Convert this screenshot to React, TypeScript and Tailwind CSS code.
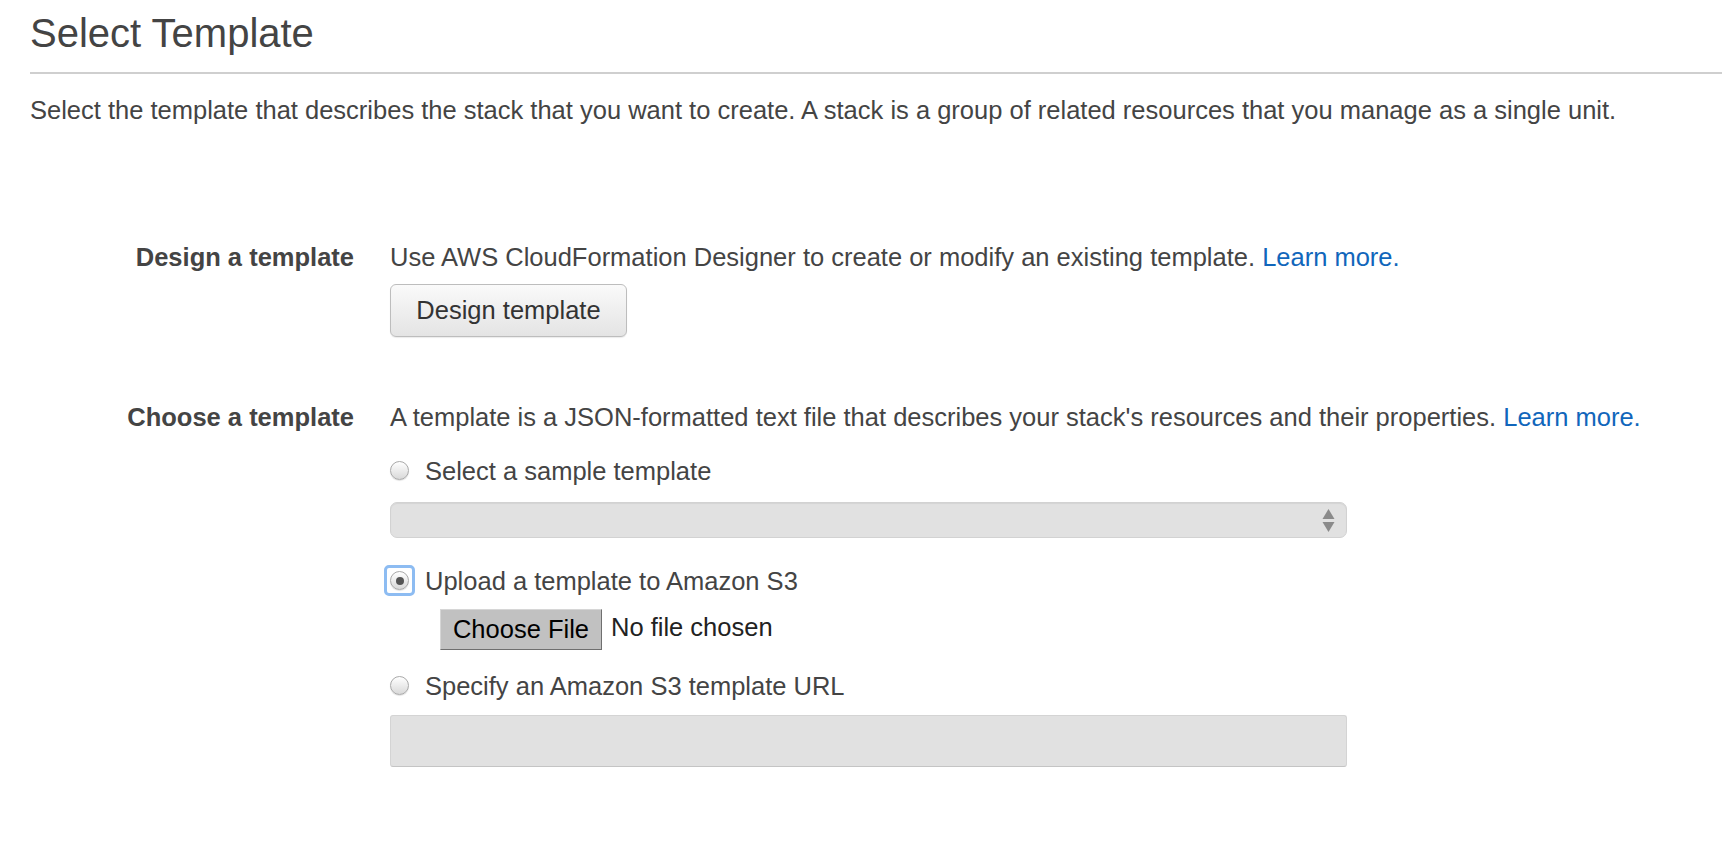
import React from 'react'

const font = { fontFamily: '"Liberation Sans", Arial, Helvetica, sans-serif' }

const Radio = ({ checked = false, focused = false }: { checked?: boolean; focused?: boolean }) => (
  <span
    className={`flex h-[31px] w-[31px] shrink-0 items-center justify-center rounded-[5px] ${
      focused ? 'border-[3px] border-[#8dbcf2]' : 'border-[3px] border-transparent'
    }`}
  >
    <span className="flex h-[19px] w-[19px] items-center justify-center rounded-full border border-[#a9a9a9] bg-gradient-to-b from-[#ffffff] to-[#d9d9d9] shadow-[0_1px_1px_rgba(0,0,0,0.12)]">
      {checked && <span className="h-[8px] w-[8px] rounded-full bg-[#555]" />}
    </span>
  </span>
)

const Option = ({ label, checked, focused }: { label: string; checked?: boolean; focused?: boolean }) => (
  <label className="-ml-[6px] flex h-[31px] items-center gap-[10px]">
    <Radio checked={checked} focused={focused} />
    <span className="text-[25.5px] leading-[28px]">{label}</span>
  </label>
)

export default function App() {
  return (
    <div className="min-h-screen bg-white text-[#444]" style={font}>
      <div className="pl-[30px] pt-[10px]">
        <h1 className="text-[40px] leading-[46px] font-normal">Select Template</h1>
      </div>
      <div className="ml-[30px] mt-[16px] border-t-2 border-[#cfcfcf]" />
      <p className="ml-[30px] mt-[22px] text-[25.5px] leading-[28px]">
        Select the template that describes the stack that you want to create. A stack is a group of related resources that you manage as a single unit.
      </p>

      <div className="mt-[119px] flex gap-[36px]">
        <div className="w-[354px] shrink-0 text-right text-[25.5px] font-bold leading-[28px]">Design a template</div>
        <div className="flex flex-col items-start">
          <p className="text-[25.5px] leading-[28px]">
            Use AWS CloudFormation Designer to create or modify an existing template.{' '}
            <a className="text-[#1166bb]">Learn more.</a>
          </p>
          <button className="mt-[13px] h-[53px] w-[237px] rounded-[6px] border border-[#bdbdbd] bg-gradient-to-b from-[#fafafa] to-[#e4e4e4] text-[25.5px] text-[#333] shadow-[0_1px_1px_rgba(0,0,0,0.08)]">
            Design template
          </button>
        </div>
      </div>

      <div className="mt-[66px] flex gap-[36px]">
        <div className="w-[354px] shrink-0 text-right text-[25.5px] font-bold leading-[28px]">Choose a template</div>
        <div className="flex flex-col items-start">
          <p className="text-[25.5px] leading-[28px]">
            A template is a JSON-formatted text file that describes your stack's resources and their properties.{' '}
            <a className="text-[#1166bb]">Learn more.</a>
          </p>

          <div className="mt-[24px]">
            <Option label="Select a sample template" />
          </div>
          <div className="relative mt-[16px] h-[36px] w-[957px] rounded-[7px] border border-[#d2d2d2] bg-[#e1e1e1] shadow-[inset_0_1px_1px_rgba(0,0,0,0.06)]">
            <svg className="absolute right-[11px] top-[5px]" width="13" height="25" viewBox="0 0 13 25">
              <path d="M6.5 1 L12.5 11 L0.5 11 Z" fill="#8a8a8a" />
              <path d="M0.5 14 L12.5 14 L6.5 24 Z" fill="#8a8a8a" />
            </svg>
          </div>

          <div className="mt-[27px]">
            <Option label="Upload a template to Amazon S3" checked focused />
          </div>
          <div className="ml-[50px] mt-[13px] flex items-center gap-[9px]">
            <button className="h-[41px] w-[162px] border border-t-[#d6d6d6] border-l-[#d6d6d6] border-b-[#6f6f6f] border-r-[#6f6f6f] bg-[#c1c1c1] text-[25.5px] text-black">
              Choose File
            </button>
            <span className="pb-[5px] text-[25.5px] leading-[28px] text-[#222]">No file chosen</span>
          </div>

          <div className="mt-[20px]">
            <Option label="Specify an Amazon S3 template URL" />
          </div>
          <div className="mt-[14px] h-[52px] w-[957px] rounded-[3px] border border-[#d4d4d4] border-b-[#c4c4c4] bg-[#e1e1e1]" />
        </div>
      </div>
    </div>
  )
}
